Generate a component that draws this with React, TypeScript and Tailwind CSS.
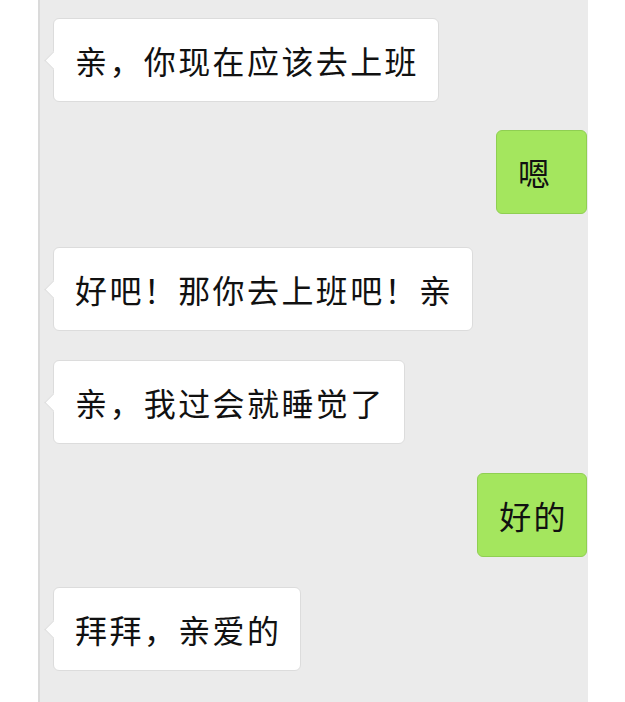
const messages: { side: "left" | "right"; text: string; mt: string }[] = [
  { side: "left", text: "亲，你现在应该去上班", mt: "mt-[18px]" },
  { side: "right", text: "嗯", mt: "mt-[28px]" },
  { side: "left", text: "好吧！那你去上班吧！亲", mt: "mt-[33px]" },
  { side: "left", text: "亲，我过会就睡觉了", mt: "mt-[29px]" },
  { side: "right", text: "好的", mt: "mt-[29px]" },
  { side: "left", text: "拜拜，亲爱的", mt: "mt-[30px]" },
]

function Bubble({ side, text, mt }: { side: "left" | "right"; text: string; mt: string }) {
  if (side === "right") {
    return (
      <div className={`${mt} self-end mr-[1px] flex h-[84px] min-w-[91px] items-center rounded-[6px] border border-[#8fcf52] bg-[#a4e65e] pl-[21px] pr-[18px]`}>
        <span className="text-[32px] tracking-[2.4px] text-[#111]">{text}</span>
      </div>
    )
  }
  return (
    <div className={`${mt} relative ml-[13px] self-start flex h-[84px] items-center rounded-[6px] border border-[#dcdcdc] bg-white pl-[21px] pr-[19px]`}>
      <div className="absolute left-[-7px] top-[35px] h-[13px] w-[13px] rotate-45 border-b border-l border-[#dcdcdc] bg-white" />
      <span className="relative text-[32px] tracking-[2.4px] text-[#111]">{text}</span>
    </div>
  )
}

export default function App() {
  return (
    <div
      className="flex h-[702px] w-[625px] overflow-hidden bg-white"
      style={{ fontFamily: '"Noto Sans CJK SC", "Noto Sans", sans-serif' }}
    >
      <div className="w-[38px] shrink-0 bg-white" />
      <div className="flex w-[550px] shrink-0 flex-col border-l-2 border-[#dadada] bg-[#ebebeb]">
        {messages.map((m, i) => (
          <Bubble key={i} side={m.side} text={m.text} mt={m.mt} />
        ))}
      </div>
      <div className="flex-1 bg-white" />
    </div>
  )
}
